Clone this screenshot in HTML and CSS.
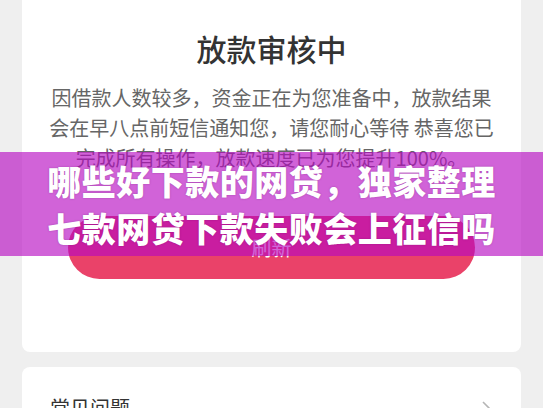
FILE: index.html
```html
<!DOCTYPE html>
<html lang="zh-CN">
<head>
<meta charset="utf-8">
<link rel="stylesheet" href="styles.css">
</head>
<body>
<div class="page">
  <section class="card status">
    <h1 class="title">放款审核中</h1>
    <p class="desc">
      <span class="line">因借款人数较多，资金正在为您准备中，放款结果</span>
      <span class="line">会在早八点前短信通知您，请您耐心等待 恭喜您已</span>
      <span class="line">完成所有操作，放款速度已为您提升100%。</span>
    </p>
    <button class="refresh">刷新</button>
  </section>
  <section class="card faq">
    <span class="faq-title">常见问题</span>
    <svg class="chev" width="10" height="16" viewBox="0 0 10 16"><path d="M2 2 L8 8 L2 14" fill="none" stroke="#b5b5b5" stroke-width="1.6"/></svg>
  </section>
</div>
<div class="banner">
  <span class="banner-line">哪些好下款的网贷，独家整理</span>
  <span class="banner-line">七款网贷下款失败会上征信吗</span>
</div>
</body>
</html>
```

FILE: styles.css
```css
html, body {
  margin: 0;
  padding: 0;
  background: #efefef;
  width: 543px;
  height: 408px;
  overflow: hidden;
  font-family: "Noto Sans CJK SC", "Noto Sans", sans-serif;
}
.page {
  padding: 0 22px;
  display: flex;
  flex-direction: column;
  gap: 15px;
}
.card {
  background: #fff;
  border-radius: 8px;
}
.status {
  margin-top: -10px;
  padding: 38px 0 73px;
  display: flex;
  flex-direction: column;
  align-items: center;
}
.title {
  margin: 0;
  font-size: 30px;
  line-height: 40px;
  font-weight: 500;
  color: #333;
}
.desc {
  margin: 15px 0 0;
  font-size: 20px;
  line-height: 30px;
  color: #666;
  text-align: center;
}
.line {
  display: block;
  white-space: pre;
}
.refresh {
  margin-top: 43px;
  width: 407px;
  height: 63px;
  border: 0;
  border-radius: 32px;
  background: #ea4269;
  color: #fff;
  font-family: inherit;
  font-size: 20px;
}
.faq {
  padding: 28px 28px 20px;
  display: flex;
  align-items: center;
  justify-content: space-between;
}
.faq-title {
  font-size: 20px;
  line-height: 26px;
  color: #333;
}
.chev {
  margin-right: 2px;
}
.banner {
  position: absolute;
  left: 0;
  top: 152px;
  width: 543px;
  height: 104px;
  background: rgba(182, 8, 194, 0.63);
  display: flex;
  flex-direction: column;
  align-items: center;
  justify-content: center;
}
.banner-line {
  color: #fff;
  font-size: 34px;
  line-height: 47px;
  font-weight: 900;
  letter-spacing: 0.5px;
  text-shadow: 0 0 2px rgba(80, 0, 90, 0.35);
  white-space: nowrap;
}
```
